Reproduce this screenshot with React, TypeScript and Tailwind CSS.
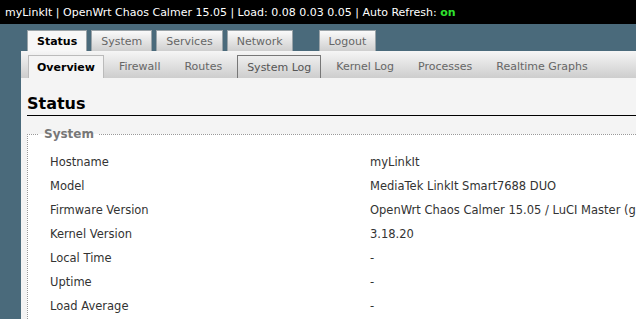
import React from "react";

const mainTabs = [
  { label: "Status", active: true },
  { label: "System" },
  { label: "Services" },
  { label: "Network" },
];

const subTabs = [
  { label: "Overview", active: true },
  { label: "Firewall" },
  { label: "Routes" },
  { label: "System Log", boxed: true },
  { label: "Kernel Log" },
  { label: "Processes" },
  { label: "Realtime Graphs" },
];

const rows = [
  ["Hostname", "myLinkIt"],
  ["Model", "MediaTek LinkIt Smart7688 DUO"],
  ["Firmware Version", "OpenWrt Chaos Calmer 15.05 / LuCI Master (git-15.248.30277-3836b45)"],
  ["Kernel Version", "3.18.20"],
  ["Local Time", "-"],
  ["Uptime", "-"],
  ["Load Average", "-"],
];

function MainTab({ label, active }: { label: string; active?: boolean }) {
  return (
    <div
      className={
        "h-[21px] px-[9px] flex items-center border border-b-0 border-[#9aa3a8] " +
        (active
          ? "bg-[#f7f7f7] text-black font-bold"
          : "bg-gradient-to-b from-[#fafafa] to-[#cfcfcf] text-[#666]")
      }
    >
      {label}
    </div>
  );
}

export default function App() {
  return (
    <div
      className="w-[636px] h-[319px] overflow-hidden bg-[#4a6a7b] text-[11px] leading-none"
      style={{ fontFamily: '"DejaVu Sans", Verdana, sans-serif' }}
    >
      {/* header bar */}
      <div className="h-[24px] bg-black text-white flex items-center pl-[5px] whitespace-nowrap">
        myLinkIt | OpenWrt Chaos Calmer 15.05 | Load: 0.08 0.03 0.05 | Auto Refresh:&nbsp;
        <span className="text-[#2fe22f] font-bold">on</span>
      </div>

      {/* main tabs */}
      <div className="flex items-end gap-[4px] pl-[27px] pt-[6px] whitespace-nowrap">
        {mainTabs.map((t) => (
          <MainTab key={t.label} label={t.label} active={t.active} />
        ))}
        <div className="ml-[22px]">
          <MainTab label="Logout" />
        </div>
      </div>

      {/* content */}
      <div className="ml-[21px] bg-[#f4f4f4] h-[300px]">
        {/* sub tabs */}
        <div className="h-[27px] pt-[3px] pl-[7px] flex items-end bg-gradient-to-b from-[#f6f6f6] to-[#cdcdcd] whitespace-nowrap">
          {subTabs.map((t) => (
            <div
              key={t.label}
              className={
                "h-[23px] flex items-center " +
                (t.active
                  ? "px-[8px] bg-[#f4f4f4] text-black font-bold border border-b-0 border-[#bbb] mr-[3px]"
                  : t.boxed
                  ? "px-[9px] text-[#555] border border-b-0 border-[#777] mx-[3px]"
                  : "px-[8px] mx-[4px] text-[#666]")
              }
            >
              {t.label}
            </div>
          ))}
        </div>

        <div className="pl-[6px]">
          <h2 className="text-[16px] font-bold text-black pt-[18px] pb-[3px] border-b border-black">Status</h2>

          <fieldset className="mt-[12px] border-t border-l border-dotted border-[#999] bg-white pb-[10px]">
            <legend className="ml-[11px] px-[5px] text-[12px] font-bold text-[#777]">System</legend>
            <div className="pt-[11px] pl-[22px]">
              {rows.map(([k, v]) => (
                <div key={k} className="flex h-[24px] items-center text-[11.5px] text-[#333] whitespace-nowrap">
                  <div className="w-[320px]">{k}</div>
                  <div>{v}</div>
                </div>
              ))}
            </div>
          </fieldset>
        </div>
      </div>
    </div>
  );
}
